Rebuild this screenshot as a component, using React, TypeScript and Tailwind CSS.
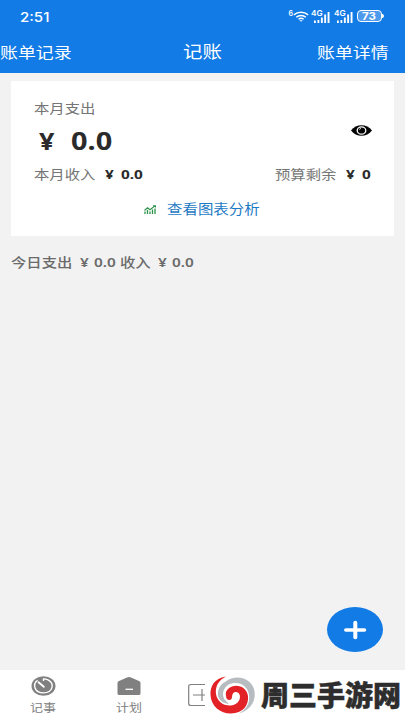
import type { ReactNode } from 'react';

type TextProps = { children: ReactNode; className?: string };

function Wide({ children, className = '' }: TextProps) {
  return (
    <span className={`block origin-left scale-x-[1.18] whitespace-pre ${className}`}>{children}</span>
  );
}

function Wifi() {
  return (
    <svg className="h-[11px] w-[16px]" viewBox="0 0 18 12" fill="none" stroke="white" strokeWidth="1.6">
      <path d="M1 4.200C5.500 .3 12.500 .3 17 4.200M3.700 6.800c3-2.600 7.800-2.600 10.800 0M6.300 9.100c1.700-1.400 4-1.400 5.700 0" />
      <path d="M7.200 10.200h3.800L9.100 12z" fill="white" stroke="none" />
    </svg>
  );
}

function Signal() {
  return (
    <div className="flex h-[13px] w-[19px] flex-col">
      <span className="h-[6px] origin-left scale-x-110 font-['Inter',sans-serif] text-[7.500px] font-semibold leading-[8px]">4G</span>
      <svg className="-mt-[5px] h-[12px] w-[19px]" viewBox="0 0 19 12" fill="white">
        <path d="M3 9.500h1.800V12H3zM6.500 9h1.800v3H6.500zM9.900 6.500h1.900V12H9.900zM13.200 3.500h1.900V12h-1.900zM16.600 1h1.900v11h-1.900z" />
      </svg>
    </div>
  );
}

function StatusBar() {
  return (
    <div className="flex h-[32px] items-center justify-between pl-[20px] pr-[21px]">
      <span className="mt-[2px] block origin-left scale-x-[1.16] font-['Inter',sans-serif] text-[13px] font-medium leading-[18px]">2:51</span>
      <div className="flex items-center">
        <span className="mb-[6px] font-['Inter',sans-serif] text-[7px] font-semibold leading-[7px]">6</span>
        <Wifi />
        <div className="ml-[2px]"><Signal /></div>
        <div className="ml-[4px]"><Signal /></div>
        <div className="ml-[4px] flex h-[12px] w-[25px] items-center justify-center rounded-[4px] border border-white bg-[#4e9aec]">
          <span className="scale-x-[1.15] font-['Inter',sans-serif] text-[10px] font-bold leading-[10px]">73</span>
        </div>
        <div className="h-[4px] w-[2px] rounded-r bg-white" />
      </div>
    </div>
  );
}

function Header() {
  return (
    <div className="grid h-[41px] grid-cols-[183px_134px_88px] items-center leading-[24px]">
      <Wide className="mb-px text-[15.200px]">账单记录</Wide>
      <Wide className="mb-px text-[16.500px]">记账</Wide>
      <Wide className="mb-px text-[15.200px]">账单详情</Wide>
    </div>
  );
}

function SummaryCard() {
  return (
    <section className="mx-[11px] mt-[8px] h-[155px] bg-white pl-[23px] pt-[17px] text-[#757575]">
      <Wide className="w-[60px] text-[13px] leading-[20px]">本月支出</Wide>
      <div className="flex h-[46px] items-center text-[#2b2b2b]">
        <Wide className="ml-[5px] w-[32px] text-[23px] font-bold leading-[30px]">¥</Wide>
        <Wide className="w-[60px] text-[24.500px] font-bold leading-[30px]">0.0</Wide>
        <svg className="ml-[220px] mb-[21px] h-[11px] w-[21px]" viewBox="0 0 21 12" preserveAspectRatio="none">
          <path d="M0 6C5-1.800 16-1.800 21 6C16 13.800 5 13.800 0 6Z" fill="#050505" />
          <ellipse cx="10.500" cy="6" rx="4.300" ry="4" fill="#050505" stroke="white" strokeWidth="1.300" />
          <path d="M8.500 5.200a1.800 1.500 0 0 1 1.500-1.500" fill="none" stroke="white" strokeWidth=".8" />
        </svg>
      </div>
      <div className="flex h-[20px] items-center text-[13px] leading-[20px]">
        <Wide className="w-[71px]">本月收入</Wide>
        <Wide className="w-[16px] font-bold text-[#2b2b2b]">¥</Wide>
        <Wide className="w-[154px] font-bold text-[#2b2b2b]">0.0</Wide>
        <Wide className="w-[71px]">预算剩余</Wide>
        <Wide className="w-[16px] font-bold text-[#2b2b2b]">¥</Wide>
        <Wide className="w-[10px] font-bold text-[#2b2b2b]">0</Wide>
      </div>
      <div className="ml-[110px] mt-[15px] flex h-[20px] items-center text-[#1f7ac4]">
        <svg className="mr-[11px] h-[9px] w-[12px]" viewBox="0 0 12 9" fill="none" stroke="#2d934b">
          <path d="M.5 5.500 3.500 2.800l2.500 2L11 .9M9 .7H11.500V2.500" strokeWidth="1.100" />
          <path d="M1 9V6.500M3.500 9V5M6 9V6.500M8.500 9V4.500M11 9V3.500" strokeWidth="1.300" />
        </svg>
        <Wide className="text-[13.100px] leading-[20px]">查看图表分析</Wide>
      </div>
    </section>
  );
}

function TodayRow() {
  return (
    <div className="ml-[11px] mt-[16px] flex h-[20px] items-center text-[13px] font-semibold leading-[20px] text-[#6b6b6b]">
      <Wide className="w-[69px] font-medium">今日支出</Wide>
      <Wide className="w-[14px]">¥</Wide>
      <Wide className="w-[26px]">0.0</Wide>
      <Wide className="w-[38px] font-medium">收入</Wide>
      <Wide className="w-[14px]">¥</Wide>
      <Wide>0.0</Wide>
    </div>
  );
}

function BottomNav() {
  return (
    <nav className="flex h-[50px] bg-white text-[#808080]">
      <div className="flex w-[86px] flex-col items-center pt-[6px]">
        <svg className="h-[20px] w-[25px]" viewBox="0 0 25 20" fill="none">
          <ellipse cx="12.500" cy="10" rx="12" ry="9.800" fill="#808080" />
          <path d="M6.500 4.200C1.500 8 3 16.700 12.500 16.900C22 16.700 24 7.500 17 3.800Q15 2.900 12.500 2.900V5" stroke="white" strokeWidth="1.400" />
          <path d="M7.500 6.200 12.800 10.800" stroke="white" strokeWidth="1.800" strokeLinecap="round" />
        </svg>
        <span className="mt-[3px] scale-x-[1.18] text-[11px] leading-[18px]">记事</span>
      </div>
      <div className="flex w-[86px] flex-col items-center pt-[6px]">
        <svg className="h-[20px] w-[24px]" viewBox="0 0 24 20">
          <path d="M2 5 10 1.500Q12 .5 14 1.500L22 5Q23.500 5.600 23.500 7V17.500Q23.500 19 21.700 19H2.300Q.5 19 .5 17.500V7Q.5 5.600 2 5Z" fill="#808080" />
          <path d="M8.500 13.300h7.500" stroke="white" strokeWidth="1.300" />
        </svg>
        <span className="mt-[3px] scale-x-[1.18] text-[11px] leading-[18px]">计划</span>
      </div>
      <div className="flex items-center pl-[16px]">
        <svg className="h-[24px] w-[17px]" viewBox="0 0 17 24" fill="none" stroke="#808080" strokeWidth="1.200">
          <path d="M17 1.500H3Q.7 1.500.7 3.500V20.500Q.7 22.500 3 22.500H17M5 12H17M14 6V18" />
        </svg>
      </div>
      <div className="ml-[5px] flex items-center">
        <svg className="h-[38px] w-[46px]" viewBox="0 0 46 38" fill="none">
          <path d="M15 6C25-2 40 1 44 13C47 24 41 34 29 37.500C37 33 40 27 39 19C38 9 27 4 18 9C12 13 12 20 15 24L19 28C11 27 7 22 8 16C9 11 11 8 15 6Z" fill="#b7bcc1" />
          <path d="M16 .5C4 2 0 11 .5 19C1 30 10 37.500 21 37.500C33 37.500 39 29 38 20C37 12 29 8 22 10.500C16 13 14 18 17 23C19 25 22 24 22 21C22 16 26 14.500 29 17.500C32 22 28 29 21 29.500C13 30 7 25 6 18C5 10 9 4 16 .5Z" fill="#e22227" />
          <path d="M16 21C13 16 17 9.500 23 9.300M22.500 25C26 25 28 22 27.500 19" stroke="white" strokeWidth=".8" />
        </svg>
        <span className="mb-px ml-[5px] whitespace-nowrap text-[28px] font-black leading-[40px] text-[#2d2d2d] [-webkit-text-stroke:0.500px_#2d2d2d]">周三手游网</span>
      </div>
    </nav>
  );
}

export default function App() {
  return (
    <main className="flex h-[720px] w-[405px] flex-col overflow-hidden bg-[#f2f2f2] font-['Noto_Sans','Noto_Sans_CJK_SC',sans-serif]">
      <header className="h-[73px] bg-[#127be6] text-white">
        <StatusBar />
        <Header />
      </header>
      <SummaryCard />
      <TodayRow />
      <div className="flex flex-1 items-end justify-end pb-[18px] pr-[22px]">
        <button className="flex h-[45px] w-[56px] items-center justify-center rounded-[50%] bg-[#127be6]">
          <svg className="h-[20px] w-[24px]" viewBox="0 0 24 20" stroke="white" strokeLinecap="round">
            <path d="M2.800 10H21.500" strokeWidth="3.500" />
            <path d="M12.300 2.700V17.300" strokeWidth="4" />
          </svg>
        </button>
      </div>
      <BottomNav />
    </main>
  );
}
